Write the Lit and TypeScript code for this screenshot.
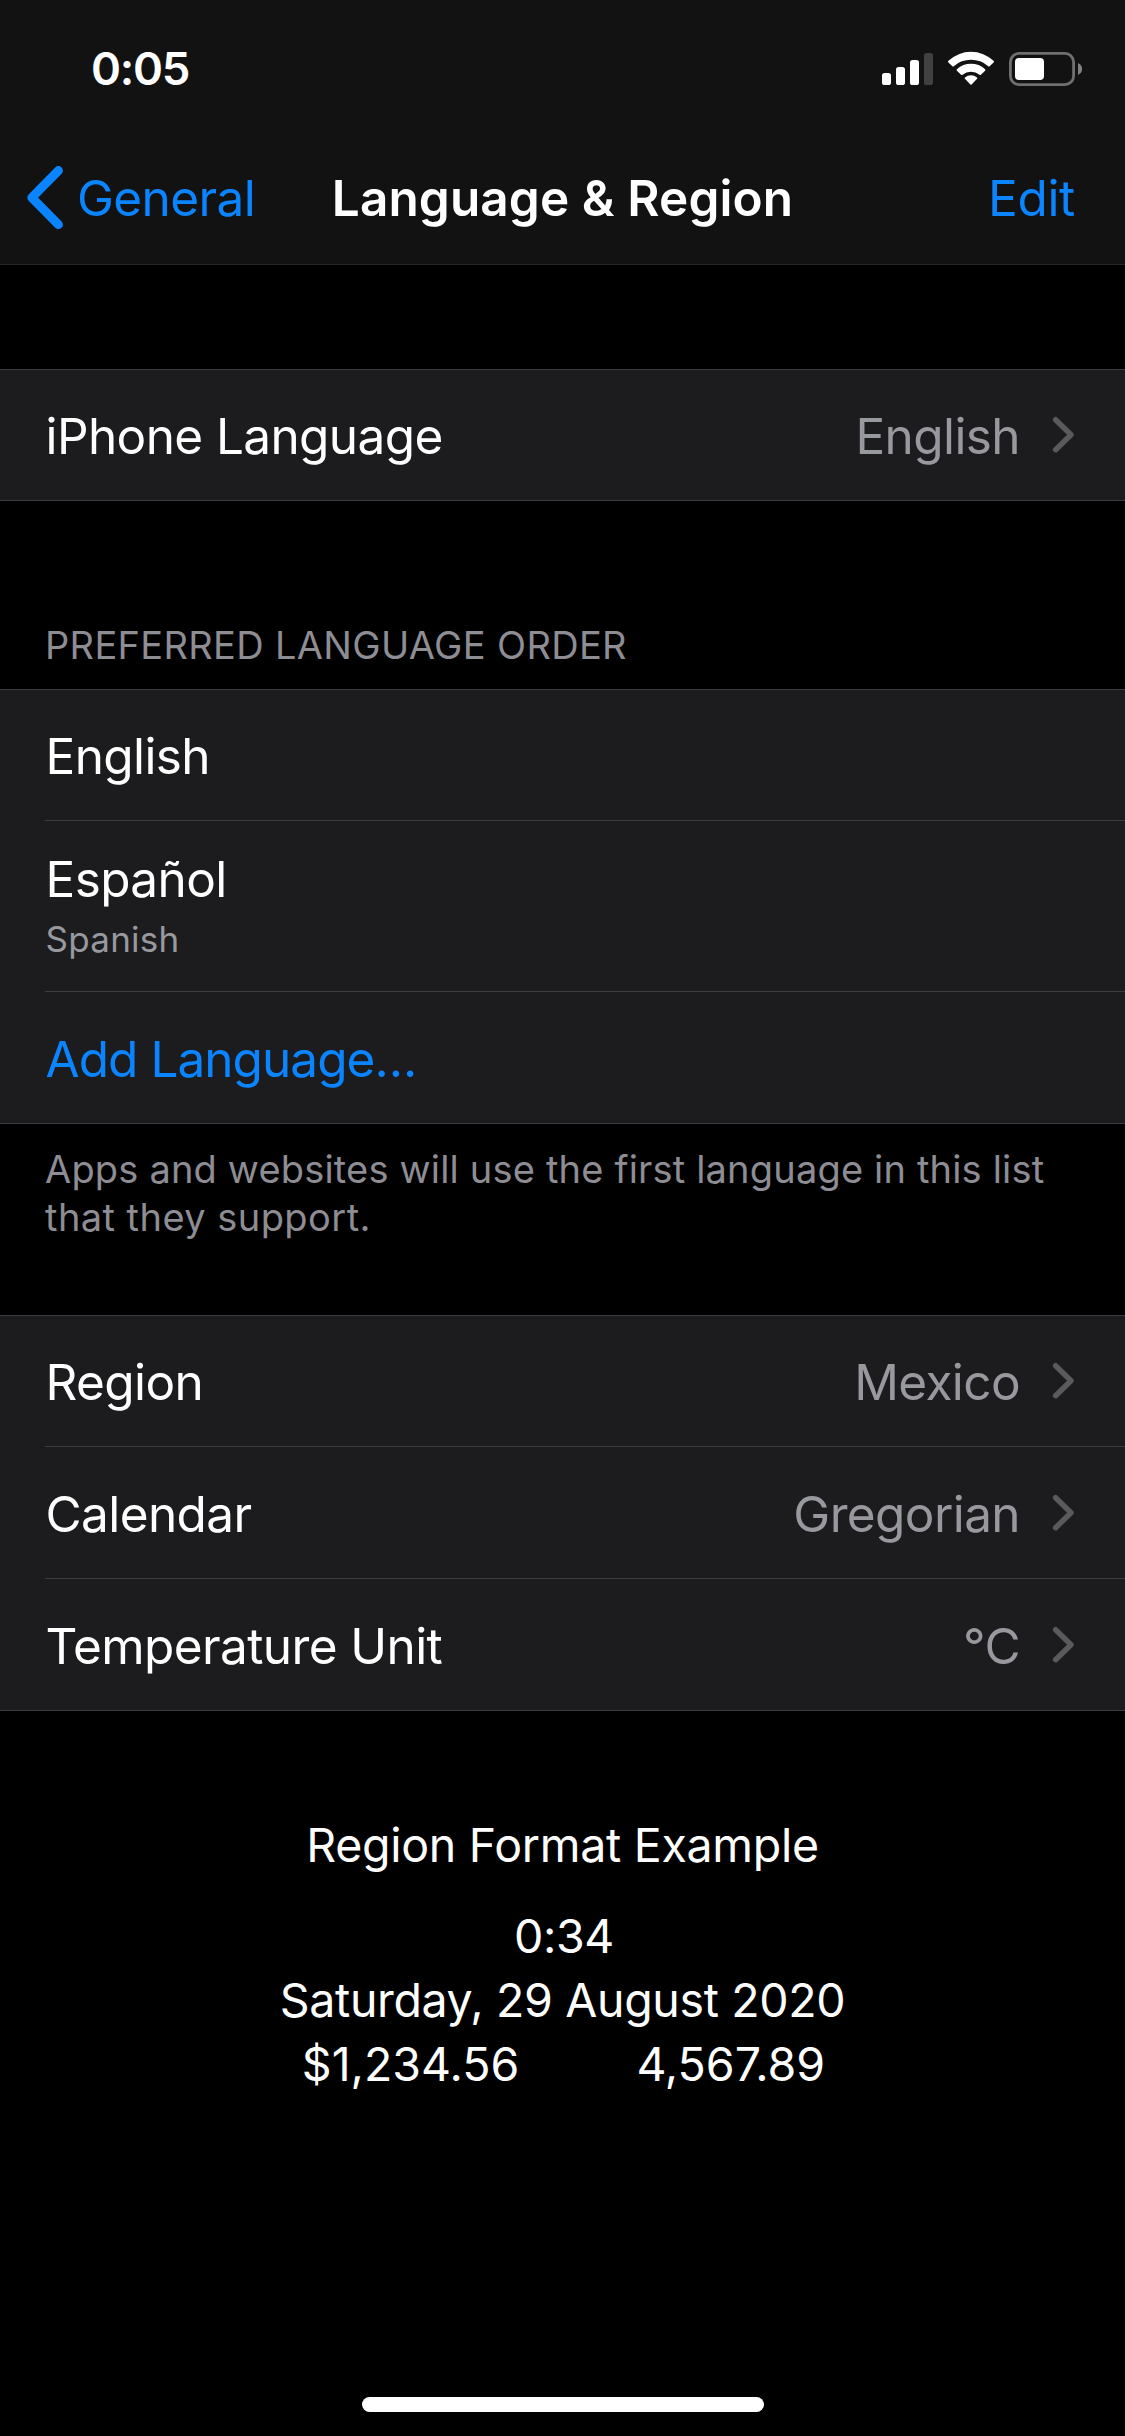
import { LitElement, html, css, nothing } from "lit";
import { customElement, property } from "lit/decorators.js";

@customElement("status-bar")
class StatusBar extends LitElement {
  static styles = css`
    :host { display: flex; justify-content: space-between; align-items: flex-start; height: 132px; box-sizing: border-box; padding: 47px 43px 0 91px; }
    .time { font-size: 45.5px; line-height: 44px; font-weight: 600; letter-spacing: -1.3px; }
    .icons { display: block; margin-top: 3px; }
  `;
  render() {
    return html`
      <span class="time">0:05</span>
      <svg class="icons" width="200" height="38" viewBox="882 50 200 38" fill="#fff">
        <rect x="882" y="73" width="9" height="12" rx="2.6" />
        <rect x="896" y="67" width="9" height="18" rx="2.6" />
        <rect x="910" y="60" width="9" height="25" rx="2.6" />
        <rect x="924" y="53" width="9" height="32" rx="2.6" fill="#414141" />
        <path d="M948.4 62.4Q947.6 61.6 948.4 60.8A33 33 0 0 1 993.6 60.8Q994.4 61.6 993.6 62.4L989.6 66.3Q988.9 66.9 988.2 66.3A25.5 25.5 0 0 0 953.8 66.3Q953.1 66.9 952.4 66.3Z" />
        <path d="M956.9 70.8Q956.2 70 956.9 69.3A21 21 0 0 1 985.1 69.3Q985.8 70 985.1 70.8L980.9 74.8Q980.2 75.4 979.5 74.8A13.2 13.2 0 0 0 962.5 74.8Q961.8 75.4 961.1 74.8Z" />
        <path d="M964.9 78.8Q964.2 78 965 77.4A9.8 9.8 0 0 1 977 77.4Q977.8 78 977.1 78.8L971.6 84.4Q971 85 970.4 84.4Z" />
        <rect x="1010.4" y="53.4" width="63.2" height="31.2" rx="8.6" fill="none" stroke="#707070" stroke-width="2.8" />
        <rect x="1015" y="58" width="29" height="22" rx="4" />
        <path d="M1078 63Q1082.2 65 1082.2 69T1078 75Z" fill="#808080" />
      </svg>
    `;
  }
}

@customElement("nav-bar")
class NavBar extends LitElement {
  static styles = css`
    :host { display: grid; grid-template-columns: 1fr auto 1fr; align-items: center; height: 132px; font-size: 49.5px; line-height: 60px; }
    .back { display: flex; align-items: center; gap: 14px; padding-left: 27px; color: #0a84ff; letter-spacing: -0.6px; }
    .title { font-weight: 600; letter-spacing: 0.1px; }
    .edit { padding-right: 50px; color: #0a84ff; text-align: right; letter-spacing: -0.3px; }
  `;
  render() {
    return html`
      <div class="back">
        <svg width="36" height="64" viewBox="27 167 36 64" fill="none" stroke="#0a84ff" stroke-width="9" stroke-linecap="round" stroke-linejoin="round">
          <path d="M58.4 171.6L31.8 198.6L58.4 225.6" />
        </svg>
        <span>General</span>
      </div>
      <div class="title">Language &amp; Region</div>
      <div class="edit">Edit</div>
    `;
  }
}

@customElement("settings-row")
class SettingsRow extends LitElement {
  @property() label = "";
  @property() detail = "";
  @property() value = "";
  @property({ type: Boolean }) action = false;

  static styles = css`
    :host { display: flex; align-items: center; box-sizing: border-box; height: 131px; padding: 2px 49px 0 45.5px; font-size: 49.5px; line-height: 60px; letter-spacing: -0.6px; color: #fff; }
    .text { flex: 1; }
    .action { color: #0a84ff; letter-spacing: -0.95px; }
    .detail { font-size: 35px; line-height: 44px; margin-top: 8px; letter-spacing: 0.25px; color: #98989f; }
    .value { color: #98989f; margin-right: 32px; }
    .chevron { display: block; margin-bottom: 2px; }
  `;
  render() {
    return html`
      <div class="text">
        <div class=${this.action ? "action" : "label"}>${this.label}</div>
        ${this.detail ? html`<div class="detail">${this.detail}</div>` : nothing}
      </div>
      ${this.value
        ? html`<span class="value">${this.value}</span>
            <svg class="chevron" width="24" height="38" viewBox="0 0 24 38" fill="none" stroke="#5a5a5e" stroke-width="5.4" stroke-linecap="round" stroke-linejoin="round">
              <path d="M3.6 3.7L19 18.7L3.6 33.7" />
            </svg>`
        : nothing}
    `;
  }
}

@customElement("app-root")
class AppRoot extends LitElement {
  static styles = css`
    :host { display: flex; flex-direction: column; width: 1125px; height: 2436px; background: #000; color: #fff; font-family: Inter, "Liberation Sans", sans-serif; overflow: hidden; }
    .header { background: #121212; border-bottom: 1px solid #262626; height: 264px; flex: none; }
    .group { background: #1c1c1e; border-top: 1px solid #3d3d41; border-bottom: 1px solid #3d3d41; flex: none; }
    .top { height: 130px; }
    .first { margin-top: 104px; }
    .last { margin-top: 67px; }
    .separator { height: 1px; margin-left: 45px; background: #3d3d41; }
    .subtitled { height: 170px; padding-bottom: 5px; }
    .caption { height: 188px; box-sizing: border-box; padding: 120px 45px 0; font-size: 38px; line-height: 48px; letter-spacing: 0.33px; color: #8d8d93; }
    .note { height: 124px; box-sizing: border-box; padding: 21px 45px 0; font-size: 38px; line-height: 48px; letter-spacing: 0.18px; white-space: nowrap; color: #8d8d93; }
    .note-end { letter-spacing: 0.45px; }
    .example { display: flex; flex-direction: column; align-items: center; padding-top: 102px; font-size: 46.5px; line-height: 64px; letter-spacing: -0.36px; }
    .heading { margin-bottom: 27px; letter-spacing: -0.28px; }
    .clock { padding-left: 3px; }
    .numbers { display: grid; grid-template-columns: auto auto; column-gap: 117px; padding-left: 2px; letter-spacing: 0; }
    .home { width: 402px; height: 15px; border-radius: 8px; background: #fff; margin: auto auto 24px; }
  `;
  render() {
    return html`
      <div class="header">
        <status-bar></status-bar>
        <nav-bar></nav-bar>
      </div>
      <div class="group first">
        <settings-row class="top" label="iPhone Language" value="English"></settings-row>
      </div>
      <div class="caption">PREFERRED LANGUAGE ORDER</div>
      <div class="group">
        <settings-row class="top" label="English"></settings-row>
        <div class="separator"></div>
        <settings-row class="subtitled" label="Español" detail="Spanish"></settings-row>
        <div class="separator"></div>
        <settings-row label="Add Language…" action></settings-row>
      </div>
      <div class="note">
        <div>Apps and websites will use the first language in this list</div>
        <div class="note-end">that they support.</div>
      </div>
      <div class="group last">
        <settings-row class="top" label="Region" value="Mexico"></settings-row>
        <div class="separator"></div>
        <settings-row label="Calendar" value="Gregorian"></settings-row>
        <div class="separator"></div>
        <settings-row label="Temperature Unit" value="°C"></settings-row>
      </div>
      <div class="example">
        <div class="heading">Region Format Example</div>
        <div class="clock">0:34</div>
        <div>Saturday, 29 August 2020</div>
        <div class="numbers"><span>$1,234.56</span><span>4,567.89</span></div>
      </div>
      <div class="home"></div>
    `;
  }
}
